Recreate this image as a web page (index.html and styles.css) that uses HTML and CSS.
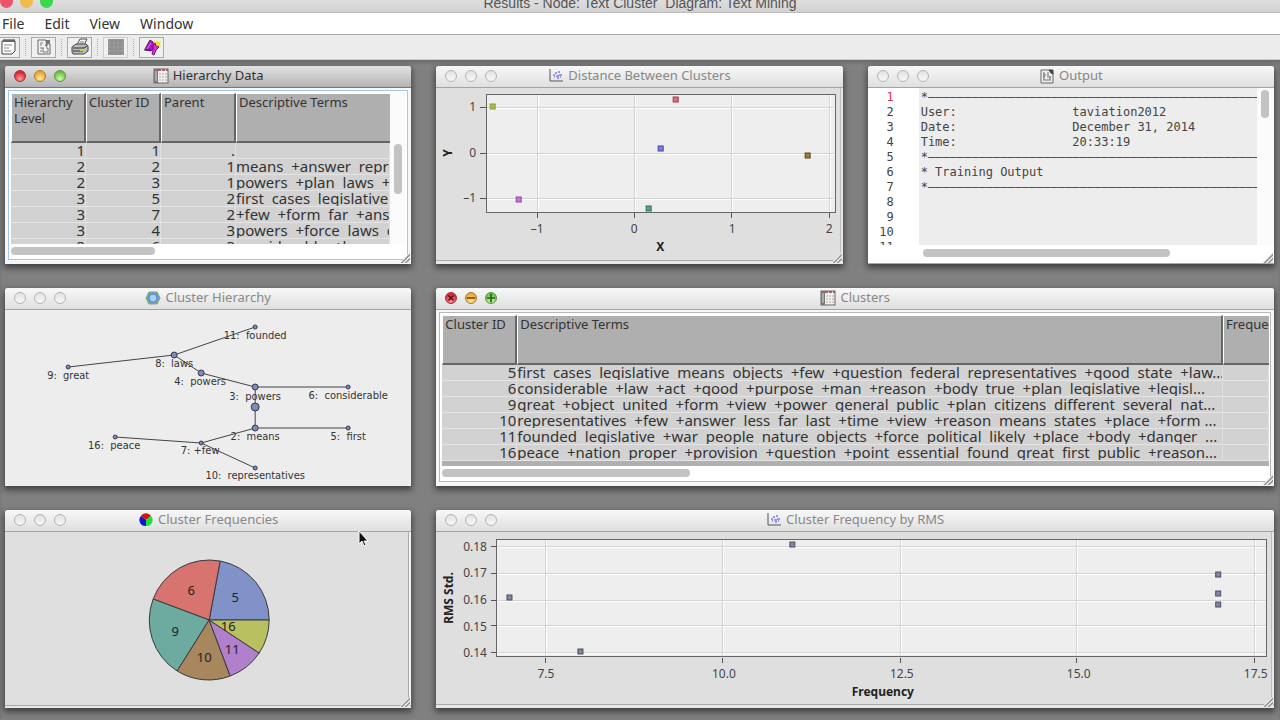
FILE: index.html
```html
<!DOCTYPE html>
<html lang="en">
<head>
    <meta charset="UTF-8">
    <meta name="viewport" content="width=device-width, initial-scale=1.0">
    <title>Results - Node: Text Cluster  Diagram: Text Mining</title>
    <link rel="stylesheet" href="styles.css">
</head>
<body>
<!-- shared window icons -->
<svg class="defs" width="0" height="0">
    <symbol id="icon-table" viewBox="0 0 16 16">
        <rect x="1" y="1" width="14" height="14" fill="#f4f0ee" stroke="#666"/>
        <rect x="1" y="1" width="4" height="14" fill="#777"/>
        <path d="M2 4h2M2 6h2M2 8h2M2 10h2M2 12h2" stroke="#ddd"/>
        <path d="M5 2h10" stroke="#b05866" stroke-width="2" stroke-dasharray="3 1"/>
        <path d="M7 5v9M10 5v9M13 5v9" stroke="#aaa" stroke-dasharray="2 1"/>
    </symbol>
    <symbol id="icon-plot" viewBox="0 0 16 16">
        <path d="M2 1v12h13" fill="none" stroke="#555"/>
        <path d="M5 7h2M7 5h2M10 4h2M8 8h3M11 7h3M9 10h2M6 9h1M12 9h1" stroke="#9a96ee" stroke-width="2"/>
    </symbol>
    <symbol id="icon-report" viewBox="0 0 16 16">
        <path d="M2 2h9l3 3v10H2z" fill="#eee" stroke="#666"/>
        <path d="M10 2h4v4l-2-1z" fill="#444" stroke="#444"/>
        <path d="M4 5h2M4 7h3M8 7h2M4 9h2M4 12h8M8 9h4M9 4v3M5 5v7M11 8v4" stroke="#777"/>
    </symbol>
</svg>

<header class="app-title">
    <div class="app-lights"><span class="red"></span><span class="yellow"></span><span class="green"></span></div>
    <h1>Results - Node: Text Cluster&nbsp; Diagram: Text Mining</h1>
</header>

<nav class="menu">
    <button type="button">File</button>
    <button type="button">Edit</button>
    <button type="button">View</button>
    <button type="button">Window</button>
</nav>

<div class="toolbar">
    <button type="button" aria-label="Notes">
        <svg viewBox="0 0 18 18"><path d="M3 3h13v10l-3 3H3z" fill="#fff" stroke="#444"/><path d="M5 1v3M7 1v3M9 1v3M11 1v3M13 1v3M15 1v3" stroke="#333"/><path d="M5 7h8M5 10h5M5 13h7" stroke="#888"/></svg>
    </button>
    <i></i>
    <button type="button" aria-label="Report">
        <svg viewBox="0 0 18 18"><path d="M3 2h8l4 4v10H3z" fill="#f4f4f4" stroke="#666"/><path d="M10 2h5v5l-2-1-1 3-2-1 1-3z" fill="#777"/><path d="M5 5h3M5 7h2M5 10h4M5 13h2M8 10v4h5v-4h-2" stroke="#777" fill="none"/></svg>
    </button>
    <i></i>
    <button type="button" aria-label="Print">
        <svg viewBox="0 0 18 18"><path d="M6 7l3-6h7l-3 6z" fill="#fff" stroke="#444"/><path d="M9 4h4M8 6h4" stroke="#777"/><path d="M1 9l4-3h10l2 2v5l-4 3H2l-1-2z" fill="#bbb" stroke="#444"/><path d="M2 10h11l3-2M2 13h10" fill="none" stroke="#333"/><path d="M9 12h4" stroke="#d5d53a" stroke-width="2"/></svg>
    </button>
    <i></i>
    <button type="button" class="off" aria-label="Table">
        <svg viewBox="0 0 18 18"><rect x="1" y="1" width="16" height="16" fill="#999"/><path d="M1 3h16M5 1v16M9 1v16M13 1v16M1 7h16M1 11h16M1 15h16" stroke="#8b8b8b"/></svg>
    </button>
    <i></i>
    <button type="button" aria-label="Highlight">
        <svg viewBox="0 0 18 18"><path d="M11 3l2 1 1-2 1 2 3-1-1 3 1 2-4 2-3-3z" fill="#f4e22a"/><path d="M2 11L7 2l3 2 1 6-3 3-5-1z" fill="#a516c4" stroke="#6a0e88"/><path d="M4 11l4-6" stroke="#f08be8"/><path d="M10 8l2-3 1 3 3 1-3 3-2 5-2-1 1-4z" fill="#e42bd2" stroke="#7a1488"/><path d="M1 12h6" stroke="#222"/></svg>
    </button>
</div>

<main class="desktop">
    <section class="window active">
        <header class="bar">
            <div class="lights lit"><button type="button" aria-label="Close"></button><button type="button" aria-label="Minimize"></button><button type="button" aria-label="Zoom"></button></div>
            <h2><svg><use href="#icon-table"/></svg>Hierarchy Data</h2>
        </header>
        <div class="body table-body">
            <div class="frame focus with-side">
                <div class="scroll">
                    <table>
                        <colgroup><col class="num"><col class="num"><col class="num"><col></colgroup>
                        <thead><tr><th>Hierarchy Level</th><th>Cluster ID</th><th>Parent</th><th>Descriptive Terms</th></tr></thead>
                        <tbody>
                            <tr><td>1</td><td>1</td><td>.</td><td></td></tr>
                            <tr><td>2</td><td>2</td><td>1</td><td>means  +answer  repre</td></tr>
                            <tr><td>2</td><td>3</td><td>1</td><td>powers  +plan  laws  +</td></tr>
                            <tr><td>3</td><td>5</td><td>2</td><td>first  cases  legislative</td></tr>
                            <tr><td>3</td><td>7</td><td>2</td><td>+few  +form  far  +ans</td></tr>
                            <tr><td>3</td><td>4</td><td>3</td><td>powers  +force  laws  c</td></tr>
                            <tr><td>3</td><td>6</td><td>3</td><td>considerable  +law</td></tr>
                        </tbody>
                    </table>
                </div>
                <div class="vbar"><span class="thumb"></span></div>
                <div class="hbar"><span class="thumb"></span></div>
            </div>
        </div>
        <span class="grip"></span>
    </section>

    <section class="window">
        <header class="bar">
            <div class="lights"><button type="button" aria-label="Close"></button><button type="button" aria-label="Minimize"></button><button type="button" aria-label="Zoom"></button></div>
            <h2><svg><use href="#icon-plot"/></svg>Distance Between Clusters</h2>
        </header>
        <div class="body chart-body">
            <svg class="chart" viewBox="0 0 406 176">
                <rect class="plot" x="50" y="6" width="349" height="118"/>
                <path class="grid-light" d="M102 7v116M199 7v116M296 7v116M394 7v116M51 20h347M51 66h347M51 111h347"/>
                <path class="grid" d="M101 7v116M198 7v116M295 7v116M393 7v116M51 19h347M51 65h347M51 110h347"/>
                <rect class="border" x="50" y="6" width="349" height="118"/>
                <path class="tick" d="M44 19h6M44 65h6M44 110h6M101 125v5M198 125v5M295 125v5M393 125v5"/>
                <g class="label end">
                    <text x="40" y="23">1</text>
                    <text x="40" y="69">0</text>
                    <text x="40" y="114">–1</text>
                </g>
                <g class="label">
                    <text x="101" y="145">–1</text>
                    <text x="198" y="145">0</text>
                    <text x="296" y="145">1</text>
                    <text x="393" y="145">2</text>
                </g>
                <text class="axis" x="224" y="163">X</text>
                <text class="axis" transform="translate(16 65) rotate(-90)">Y</text>
                <g class="point">
                    <rect x="54" y="16" width="5" height="5" fill="#a9ba4e" stroke="#8c9c30"/>
                    <rect x="237" y="9" width="5" height="5" fill="#d9727a" stroke="#b03545"/>
                    <rect x="222" y="58" width="5" height="5" fill="#8080dc" stroke="#4040a8"/>
                    <rect x="369" y="65" width="5" height="5" fill="#9c7c3c" stroke="#5e4620"/>
                    <rect x="80" y="109" width="5" height="5" fill="#bf78d4" stroke="#9440b0"/>
                    <rect x="210" y="118" width="5" height="5" fill="#5aa394" stroke="#26705f"/>
                </g>
            </svg>
        </div>
        <span class="grip"></span>
    </section>

    <section class="window">
        <header class="bar">
            <div class="lights"><button type="button" aria-label="Close"></button><button type="button" aria-label="Minimize"></button><button type="button" aria-label="Zoom"></button></div>
            <h2><svg><use href="#icon-report"/></svg>Output</h2>
        </header>
        <div class="body output">
            <pre class="lines"><b>1</b>
2
3
4
5
6
7
8
9
10
11</pre>
            <pre class="code">*–––––––––––––––––––––––––––––––––––––––––––––––
User:                taviation2012
Date:                December 31, 2014
Time:                20:33:19
*–––––––––––––––––––––––––––––––––––––––––––––––
* Training Output
*–––––––––––––––––––––––––––––––––––––––––––––––</pre>
            <div class="vbar"><span class="thumb"></span></div>
            <div class="hbar"><span class="thumb"></span></div>
        </div>
        <span class="grip"></span>
    </section>

    <section class="window">
        <header class="bar">
            <div class="lights"><button type="button" aria-label="Close"></button><button type="button" aria-label="Minimize"></button><button type="button" aria-label="Zoom"></button></div>
            <h2><svg viewBox="0 0 16 16"><path d="M4 2h8l3 6-3 6H4L1 8z" fill="#6fa0cc" stroke="#7f9fb0"/><circle cx="8" cy="8" r="4" fill="#a9cdf5" stroke="#5a86c4"/><path d="M3 3l2 1M13 3l-2 1M3 13l2-1M13 13l-2-1M1 8h1M14 8h1" stroke="#6cb85a" stroke-width="2"/></svg>Cluster Hierarchy</h2>
        </header>
        <div class="body tree-body">
            <svg class="chart" viewBox="0 0 406 176">
                <path class="edge" d="M250 17L169 45L63 57M169 45L196 63L250 77H343M250 77V118H343M250 118L196 133L110 127M196 133L250 158"/>
                <g class="node">
                    <circle cx="250" cy="17" r="2"/>
                    <circle cx="169" cy="45" r="3"/>
                    <circle cx="63" cy="57" r="2"/>
                    <circle cx="196" cy="63" r="3"/>
                    <circle cx="250" cy="77" r="3"/>
                    <circle cx="343" cy="77" r="2"/>
                    <circle cx="250" cy="97" r="4"/>
                    <circle cx="250" cy="118" r="3"/>
                    <circle cx="343" cy="118" r="2"/>
                    <circle cx="196" cy="133" r="2"/>
                    <circle cx="110" cy="127" r="2"/>
                    <circle cx="250" cy="158" r="2"/>
                </g>
                <g class="name">
                    <text x="250" y="29">11:&nbsp; founded</text>
                    <text x="169" y="57">8:&nbsp; laws</text>
                    <text x="63" y="69">9:&nbsp; great</text>
                    <text x="195" y="75">4:&nbsp; powers</text>
                    <text x="250" y="90">3:&nbsp; powers</text>
                    <text x="343" y="89">6:&nbsp; considerable</text>
                    <text x="250" y="130">2:&nbsp; means</text>
                    <text x="343" y="130">5:&nbsp; first</text>
                    <text x="195" y="144">7: +few</text>
                    <text x="109" y="139">16:&nbsp; peace</text>
                    <text x="250" y="169">10:&nbsp; representatives</text>
                </g>
            </svg>
        </div>
    </section>

    <section class="window wide">
        <header class="bar">
            <div class="lights lit hover">
                <button type="button" aria-label="Close"><svg viewBox="0 0 12 12"><path d="M3 3l6 6M9 3l-6 6"/></svg></button>
                <button type="button" aria-label="Minimize"><svg viewBox="0 0 12 12"><path d="M1 6h10"/></svg></button>
                <button type="button" aria-label="Zoom"><svg viewBox="0 0 12 12"><path d="M1 6h10M6 1v10"/></svg></button>
            </div>
            <h2><svg><use href="#icon-table"/></svg>Clusters</h2>
        </header>
        <div class="body table-body">
            <div class="frame">
                <div class="scroll">
                    <table>
                        <colgroup><col class="num"><col><col class="freq"></colgroup>
                        <thead><tr><th>Cluster ID</th><th>Descriptive Terms</th><th>Freque</th></tr></thead>
                        <tbody>
                            <tr><td>5</td><td>first  cases  legislative  means  objects  +few  +question  federal  representatives  +good  state  +law...</td><td></td></tr>
                            <tr><td>6</td><td>considerable  +law  +act  +good  +purpose  +man  +reason  +body  true  +plan  legislative  +legisl...</td><td></td></tr>
                            <tr><td>9</td><td>great  +object  united  +form  +view  +power  general  public  +plan  citizens  different  several  nat...</td><td></td></tr>
                            <tr><td>10</td><td>representatives  +few  +answer  less  far  last  +time  +view  +reason  means  states  +place  +form ...</td><td></td></tr>
                            <tr><td>11</td><td>founded  legislative  +war  people  nature  objects  +force  political  likely  +place  +body  +danger  ...</td><td></td></tr>
                            <tr><td>16</td><td>peace  +nation  proper  +provision  +question  +point  essential  found  great  first  public  +reason...</td><td></td></tr>
                        </tbody>
                    </table>
                </div>
                <div class="hbar"><span class="thumb"></span></div>
            </div>
        </div>
        <span class="grip"></span>
    </section>

    <section class="window">
        <header class="bar">
            <div class="lights"><button type="button" aria-label="Close"></button><button type="button" aria-label="Minimize"></button><button type="button" aria-label="Zoom"></button></div>
            <h2><svg viewBox="0 0 16 16"><path d="M8 8L3 4a6 6 0 0 1 10 0z" fill="#d01414"/><path d="M8 8l5-4a6 6 0 0 1-5 10z" fill="#1fe03a"/><path d="M8 8v6a6 6 0 0 1-5-10z" fill="#1414c8"/></svg>Cluster Frequencies</h2>
        </header>
        <div class="body pie-body">
            <svg class="chart" viewBox="0 0 406 176">
                <g class="slice">
                    <path d="M204 88H264A60 60 0 0 0 215 29z" fill="#8092c8"/>
                    <path d="M204 88L215 29A60 60 0 0 0 148 67z" fill="#d87470"/>
                    <path d="M204 88L148 67A60 60 0 0 0 172 139z" fill="#6daba0"/>
                    <path d="M204 88L172 139A60 60 0 0 0 225 144z" fill="#a8865e"/>
                    <path d="M204 88L225 144A60 60 0 0 0 254 121z" fill="#b080cc"/>
                    <path d="M204 88L254 121A60 60 0 0 0 264 88z" fill="#b8c060"/>
                </g>
                <g class="value">
                    <text x="230" y="70">5</text>
                    <text x="186" y="63">6</text>
                    <text x="170" y="104">9</text>
                    <text x="199" y="130">10</text>
                    <text x="227" y="122">11</text>
                    <text x="223" y="99">16</text>
                </g>
            </svg>
        </div>
        <span class="grip"></span>
        <svg class="cursor" viewBox="0 0 12 18"><path d="M1 1v13l3-3 2 5 2-1-2-4h4z" fill="#111" stroke="#fff"/></svg>
    </section>

    <section class="window wide">
        <header class="bar">
            <div class="lights"><button type="button" aria-label="Close"></button><button type="button" aria-label="Minimize"></button><button type="button" aria-label="Zoom"></button></div>
            <h2><svg><use href="#icon-plot"/></svg>Cluster Frequency by RMS</h2>
        </header>
        <div class="body chart-body">
            <svg class="chart" viewBox="0 0 838 176">
                <rect class="plot" x="61" y="7" width="770" height="118"/>
                <path class="grid-light" d="M111 8v116M288 8v116M466 8v116M642 8v116M820 8v116M62 15h768M62 42h768M62 69h768M62 95h768M62 122h768"/>
                <path class="grid" d="M110 8v116M287 8v116M465 8v116M641 8v116M819 8v116M62 14h768M62 41h768M62 68h768M62 94h768M62 121h768"/>
                <rect class="border" x="61" y="7" width="770" height="118"/>
                <path class="tick" d="M55 14h6M55 41h6M55 68h6M55 94h6M55 121h6M110 126v5M287 126v5M465 126v5M641 126v5M819 126v5"/>
                <g class="label end">
                    <text x="51" y="19">0.18</text>
                    <text x="51" y="45">0.17</text>
                    <text x="51" y="72">0.16</text>
                    <text x="51" y="99">0.15</text>
                    <text x="51" y="125">0.14</text>
                </g>
                <g class="label">
                    <text x="110" y="146">7.5</text>
                    <text x="288" y="146">10.0</text>
                    <text x="466" y="146">12.5</text>
                    <text x="643" y="146">15.0</text>
                    <text x="820" y="146">17.5</text>
                </g>
                <text class="axis" x="447" y="164">Frequency</text>
                <text class="axis" transform="translate(17 66) rotate(-90)">RMS Std.</text>
                <g class="point" fill="#8088a4" stroke="#4a4e60">
                    <rect x="71" y="63" width="5" height="5"/>
                    <rect x="142" y="117" width="5" height="5"/>
                    <rect x="354" y="10" width="5" height="5"/>
                    <rect x="780" y="40" width="5" height="5"/>
                    <rect x="780" y="59" width="5" height="5"/>
                    <rect x="780" y="70" width="5" height="5"/>
                </g>
            </svg>
        </div>
        <span class="grip"></span>
    </section>
</main>
</body>
</html>
```
FILE: styles.css
```css
* {
    box-sizing: border-box;
}

html, body {
    height: 100%;
    margin: 0;
    overflow: hidden;
}

body {
    display: flex;
    flex-direction: column;
    background-color: #808080;
    color: #333;
    font-family: "Noto Sans", "Lucida Grande", sans-serif;
    font-size: 14px;
}

h1, h2 {
    margin: 0;
    font-weight: normal;
}

button {
    padding: 0;
    border: none;
    background: none;
    color: inherit;
    font: inherit;
}

.defs {
    position: absolute;
}

/* application title bar, cut off by the top of the screen */
.app-title {
    flex: none;
    display: grid;
    grid-template-columns: 1fr auto 1fr;
    grid-template-rows: 12px;
    align-items: end;
    height: 13px;
    overflow: hidden;
    background: linear-gradient(#dedede, #d2d2d2);
    border-bottom: 1px solid #bbb;
}

.app-title h1 {
    color: #555;
    font-family: "Liberation Sans", Arial, sans-serif;
    font-size: 14px;
    line-height: 18px;
}

.app-lights {
    display: flex;
    gap: 7px;
    padding-bottom: 4px;
}

.app-lights span {
    width: 13px;
    height: 13px;
    border-radius: 50%;
}

.app-lights .red { background-color: #ec5568; }
.app-lights .yellow { background-color: #f0bc4b; }
.app-lights .green { background-color: #38d94c; }

.menu {
    flex: none;
    display: flex;
    gap: 20px;
    height: 22px;
    padding-left: 2px;
    background-color: #fff;
    border-bottom: 1px solid #a8aca8;
    line-height: 21px;
}

.toolbar {
    flex: none;
    display: flex;
    align-items: center;
    gap: 5px;
    height: 25px;
    background-color: #ececec;
    border-bottom: 1px solid #ccc;
}

.toolbar button {
    display: flex;
    align-items: center;
    justify-content: center;
    width: 25px;
    height: 21px;
    border: 1px solid #aaa;
    background-color: #f0f0f0;
}

.toolbar button:first-child {
    margin-left: -5px;
}

.toolbar .off {
    border-color: #ccc;
}

.toolbar button svg {
    flex: none;
    width: 18px;
    height: 18px;
}

.toolbar i {
    height: 17px;
    border-left: 1px dotted #aaa;
}

.desktop {
    flex: 1;
    min-height: 0;
    display: grid;
    grid-template-columns: repeat(3, minmax(0, 1fr));
    grid-template-rows: repeat(3, minmax(0, 1fr));
    gap: 24px 25px;
    padding: 6px 6px 12px 5px;
    box-shadow: inset 0 3px 3px #6c6c6c;
}

.window {
    position: relative;
    display: flex;
    flex-direction: column;
    min-height: 0;
    background-color: #ededed;
    border-radius: 3px 3px 0 0;
    box-shadow: 0 3px 6px 1px rgba(0, 0, 0, 0.5);
}

.wide {
    grid-column: span 2;
}

.bar {
    flex: none;
    display: grid;
    grid-template-columns: 1fr auto 1fr;
    align-items: center;
    height: 22px;
    padding: 0 9px 2px;
    border-bottom: 1px solid #a4a4a4;
    border-radius: 3px 3px 0 0;
    background: linear-gradient(#f8f8f8, #dfdfdf);
    color: #888;
}

.active .bar {
    background: linear-gradient(#e2e2e2, #b4b4b4);
    border-bottom-color: #777;
    color: #333;
}

.bar h2 {
    display: flex;
    align-items: center;
    gap: 4px;
    font-size: 13px;
    line-height: 19px;
}

.bar h2 svg {
    width: 16px;
    height: 16px;
}

.lights {
    display: flex;
    gap: 8px;
}

.lights button {
    display: flex;
    width: 12px;
    height: 12px;
    border: 1px solid #b4b4b4;
    border-radius: 50%;
    background: linear-gradient(#e2e2e2, #f8f8f8);
}

.lit button:nth-child(1) {
    border-color: #9c3038;
    background: radial-gradient(circle at 50% 80%, #ff9a9a, #dc2838 70%);
}

.lit button:nth-child(2) {
    border-color: #a87a30;
    background: radial-gradient(circle at 50% 80%, #ffe9a0, #f0a834 70%);
}

.lit button:nth-child(3) {
    border-color: #5c943c;
    background: radial-gradient(circle at 50% 80%, #d4f8b0, #6cc44c 70%);
}

.lights svg {
    width: 10px;
    height: 10px;
    fill: none;
    stroke: #5c0c10;
    stroke-width: 2;
}

.hover button:nth-child(2) svg { stroke: #7c4c10; }
.hover button:nth-child(3) svg { stroke: #1c6410; }

.body {
    flex: 1;
    min-height: 0;
}

.chart-body {
    background-color: #dfdfdf;
    box-shadow: inset 0 -3px #e8e8e8, inset 0 -4px #aaa, inset -2px 0 #e8e8e8, inset -3px 0 #bbb;
}

.pie-body {
    background-color: #dfdfdf;
    box-shadow: inset 0 -2px #e8e8e8, inset 0 -3px #aaa, inset -2px 0 #f4f4f4, inset -3px 0 #aaa;
}

.chart {
    display: block;
    width: 100%;
    height: 100%;
}

/* resize handle in the window corner */
.grip {
    position: absolute;
    right: 1px;
    bottom: 1px;
    width: 11px;
    height: 11px;
    background: repeating-linear-gradient(135deg, #999 0 1px, #e4e4e4 1px 3px);
    clip-path: polygon(100% 0, 100% 100%, 0 100%);
}

/* tables */
.table-body {
    padding: 2px 3px 4px;
    background-color: #f6f6f6;
}

.frame {
    display: grid;
    grid-template-columns: minmax(0, 1fr);
    grid-template-rows: minmax(0, 1fr) 15px;
    height: 100%;
    padding: 2px 1px 0 2px;
    border: 1px solid #b8b8b8;
    background-color: #fff;
}

.frame.focus {
    border-color: #a2c8e6;
}

.with-side {
    grid-template-columns: minmax(0, 1fr) 16px;
}

.scroll {
    overflow: hidden;
    background-color: #b0b0b0;
}

table {
    width: 100%;
    table-layout: fixed;
    border-collapse: separate;
    border-spacing: 0;
}

.num {
    width: 75px;
}

.freq {
    width: 46px;
}

th {
    height: 50px;
    padding: 0 2px;
    border: solid #fff;
    border-width: 1px 2px 2px 1px;
    border-right-color: #666;
    border-bottom-color: #666;
    background-color: #afafaf;
    font-size: 13px;
    font-weight: normal;
    line-height: 16px;
    text-align: left;
    vertical-align: top;
    overflow: hidden;
}

th:last-child {
    border-right: none;
}

td {
    height: 16px;
    padding: 0;
    border-bottom: 1px solid #e4e4e4;
    border-right: 1px solid #e0e0e0;
    background-color: #d2d2d2;
    font-size: 15px;
    line-height: 15px;
    text-align: right;
    white-space: pre;
    overflow: hidden;
}

.with-side td:nth-child(4),
.wide td:nth-child(2) {
    text-align: left;
}

.thumb {
    display: block;
    border-radius: 4px;
    background-color: #c3c3c3;
}

.vbar {
    padding: 51px 4px 0;
    background-color: #fbfbfb;
}

.vbar .thumb {
    width: 8px;
    height: 50px;
}

.hbar {
    grid-column: 1;
    padding: 3px 0 0;
}

.hbar .thumb {
    width: 38%;
    height: 8px;
}

.wide .hbar .thumb {
    width: 30%;
}

/* program output */
.output {
    display: grid;
    grid-template-columns: 51px minmax(0, 1fr) 17px;
    grid-template-rows: minmax(0, 1fr) 18px;
    background-color: #fff;
    border-bottom: 1px solid #aaa;
}

.output pre {
    margin: 0;
    padding-top: 2px;
    overflow: hidden;
    color: #444;
    font-family: "DejaVu Sans Mono", monospace;
    font-size: 12px;
    line-height: 15px;
}

.output .lines {
    padding-right: 25px;
    text-align: right;
}

.lines b {
    color: #d0314e;
    font-weight: normal;
}

.output .code {
    padding-left: 2px;
    background-color: #ededed;
}

.output .vbar {
    padding-top: 2px;
}

.output .vbar .thumb {
    height: 28px;
}

.output .hbar {
    grid-column: 2;
    padding: 4px 0 0 4px;
}

.output .hbar .thumb {
    width: 74%;
}

/* charts */
.plot {
    fill: #eee;
}

.grid, .grid-light, .border, .tick {
    fill: none;
    shape-rendering: crispEdges;
}

.grid { stroke: #d4d4d4; }
.grid-light { stroke: #fff; }
.border { stroke: #666; }
.tick { stroke: #555; }

.label {
    fill: #444;
    font-size: 12px;
    text-anchor: middle;
}

.label.end {
    text-anchor: end;
}

.axis {
    fill: #222;
    font-size: 12px;
    font-weight: bold;
    text-anchor: middle;
}

.edge {
    fill: none;
    stroke: #444;
}

.node {
    fill: #7f8bb5;
    stroke: #333a55;
}

.name {
    fill: #333;
    font-family: "DejaVu Sans Condensed", "DejaVu Sans", sans-serif;
    font-size: 11px;
    text-anchor: middle;
}

.slice {
    stroke: #3a3a3a;
}

.value {
    fill: #222;
    font-size: 13px;
    text-anchor: middle;
}

/* mouse pointer */
.cursor {
    position: absolute;
    top: 20px;
    right: 41px;
    width: 12px;
    height: 18px;
}
```
